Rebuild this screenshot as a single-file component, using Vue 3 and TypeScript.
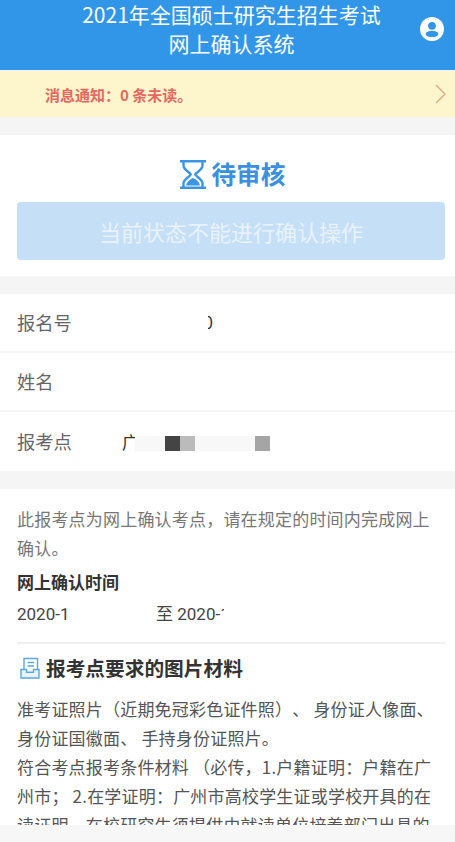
<script setup lang="ts">
const noticeText: string = '消息通知：0 条未读。'
</script>

<template>
  <div class="page">
    <header class="header">
      <h1 class="title">2021年全国硕士研究生招生考试<br />网上确认系统</h1>
      <svg class="avatar" viewBox="0 0 24 24" aria-hidden="true">
        <circle cx="12" cy="12" r="12" fill="#fff" />
        <circle cx="12" cy="8.8" r="3.9" fill="#3296e8" />
        <ellipse cx="12" cy="16.9" rx="6.4" ry="3.2" fill="#3296e8" />
      </svg>
    </header>

    <div class="notice">
      <span class="notice-text">{{ noticeText }}</span>
      <svg class="chevron" viewBox="0 0 11 20" aria-hidden="true">
        <path d="M1 1l9 9-9 9" fill="none" stroke="#e9a07c" stroke-width="1.2" />
      </svg>
    </div>

    <section class="card status">
      <div class="status-line">
        <svg class="hourglass" viewBox="0 0 26 29" aria-hidden="true">
          <path d="M0 1.2h26M0 27.8h26" stroke="#3a95e4" stroke-width="2.4" fill="none" />
          <path d="M3.5 1.2v4.6c0 3.6 6 6.4 7.3 8.7-1.3 2.3-7.3 5.1-7.3 8.7v4.6M22.5 1.2v4.6c0 3.6-6 6.4-7.3 8.7 1.3 2.3 7.3 5.1 7.3 8.7v4.6" stroke="#3a95e4" stroke-width="2.4" fill="none" />
          <path d="M6.200 25.500c0-3.500 4.300-6.500 6.800-7.500 2.500 1 6.800 4 6.800 7.500z" fill="#3a95e4" />
        </svg>
        <span class="status-text">待审核</span>
      </div>
      <button class="disabled-btn" type="button">当前状态不能进行确认操作</button>
    </section>

    <section class="card rows">
      <div class="row">
        <span class="label">报名号</span>
        <span class="value value-id"><span class="clip-glyph">0</span></span>
      </div>
      <div class="row">
        <span class="label">姓名</span>
      </div>
      <div class="row">
        <span class="label">报考点</span>
        <span class="value value-site">
          <span class="site-start">广</span>
          <i class="mosaic pale wide"></i>
          <i class="mosaic dark"></i>
          <i class="mosaic light"></i>
          <i class="mosaic pale gap"></i>
          <i class="mosaic mid"></i>
        </span>
      </div>
    </section>

    <section class="card info">
      <p class="muted">此报考点为网上确认考点，请在规定的时间内完成网上确认。</p>
      <h3 class="sub">网上确认时间</h3>
      <div class="dates">
        <span class="date-a"><span class="date-clip-a">2020-1</span></span>
        <span class="date-b">至 2020-<span class="date-clip">1</span></span>
      </div>
      <div class="divider"></div>
      <h2 class="section-title">
        <svg class="doc" viewBox="0 0 20 22" aria-hidden="true">
          <path d="M4 13V1.500h13.500V13" fill="none" stroke="#58a8e6" stroke-width="1.400" />
          <path d="M7.500 5.500h6.500M7.500 9h6.500" stroke="#58a8e6" stroke-width="1.400" />
          <path d="M1 12.500h5.500v2.800h7v-2.800H19v8.500H1z" fill="#e8f3fc" stroke="#58a8e6" stroke-width="1.400" />
        </svg>
        报考点要求的图片材料
      </h2>
      <p class="body">准考证照片（近期免冠彩色证件照）、 身份证人像面、身份证国徽面、 手持身份证照片。</p>
      <p class="body">符合考点报考条件材料 （必传，1.户籍证明：户籍在广州市； 2.在学证明：广州市高校学生证或学校开具的在读证明，在校研究生须提供由就读单位培养部门出具的</p>
    </section>

    <div class="bottom-bar"></div>
  </div>
</template>

<style>
html, body { margin: 0; background: #fff; }
</style>

<style scoped>
.page {
  position: relative;
  width: 455px;
  height: 842px;
  overflow: hidden;
  background: #f5f5f5;
  font-family: "Noto Sans CJK SC", Roboto, sans-serif;
  text-spacing-trim: space-all;
}
.header {
  position: relative;
  height: 70px;
  box-sizing: border-box;
  padding-left: 8px;
  background: #3296e8;
  text-align: center;
}
.title {
  margin: 0;
  font-size: 21px;
  font-weight: 400;
  line-height: 29px;
  color: #fff;
}
.avatar {
  position: absolute;
  top: 17px;
  right: 11px;
  width: 24px;
  height: 24px;
}
.notice {
  display: flex;
  align-items: center;
  justify-content: space-between;
  height: 46px;
  margin-top: 1px;
  padding: 0 9px 0 45px;
  background: #fdf5cc;
}
.notice-text {
  font-size: 15px;
  font-weight: 700;
  color: #e8675f;
}
.chevron { width: 11px; height: 20px; }
.card { background: #fff; margin-top: 18px; }
.status {
  height: 141px;
  box-sizing: border-box;
  padding: 25px 10px 0 17px;
}
.status-line {
  display: flex;
  align-items: center;
  justify-content: center;
  gap: 6px;
  height: 29px;
  margin-left: 3px;
}
.hourglass { width: 26px; height: 29px; }
.status-text {
  font-size: 24.600px;
  font-weight: 700;
  line-height: 27px;
  margin-top: -2px;
  color: #3a90de;
}
.disabled-btn {
  display: block;
  width: 428px;
  height: 58px;
  margin-top: 13px;
  padding: 0;
  border: 0;
  border-radius: 4px;
  background: #c4dff6;
  font-family: inherit;
  font-size: 22px;
  color: #e9f3fc;
}
.row {
  display: flex;
  align-items: center;
  height: 59px;
  box-sizing: border-box;
  padding: 0 0 1px 17px;
  border-bottom: 2px solid #f6f6f6;
}
.row:last-child { border-bottom: 0; }
.label {
  width: 104px;
  font-size: 18.300px;
  color: #666;
}
.value { display: flex; align-items: center; font-size: 17px; color: #333; }
.value-id { padding-left: 87px; }
.clip-glyph {
  display: block;
  width: 5px;
  height: 20px;
  overflow: hidden;
  direction: rtl;
  line-height: 20px;
}
.site-start {
  display: block;
  width: 13px;
  overflow: hidden;
  margin-left: 1px;
}
.mosaic { display: block; width: 15px; height: 15px; margin-top: 5px; }
.pale { background: #f8f8f8; }
.wide { width: 30px; }
.gap { width: 60px; }
.dark { background: #444; }
.light { background: #bbb; }
.mid { background: #a5a5a5; }
.info { padding: 15px 10px 0 17px; height: 340px; }
.muted, .body {
  margin: 0;
  font-size: 17px;
  letter-spacing: 0.2px;
  line-height: 29px;
}
.muted { color: #777; }
.body { color: #555; }
.sub {
  margin: 5px 0 0;
  font-size: 17px;
  font-weight: 700;
  letter-spacing: 0;
  line-height: 29px;
  color: #333;
}
.dates {
  display: flex;
  margin-top: 4px;
  font-family: Roboto, "Noto Sans CJK SC", sans-serif;
  font-size: 17px;
  line-height: 29px;
  color: #444;
}
.date-a { width: 139px; }
.date-clip-a { display: inline-block; width: 50px; overflow: hidden; white-space: nowrap; vertical-align: bottom; }
.date-clip { display: inline-block; width: 4px; overflow: hidden; vertical-align: bottom; }
.divider {
  height: 2px;
  margin-top: 13px;
  background: #f0f0f0;
}
.section-title {
  display: flex;
  align-items: center;
  gap: 6px;
  margin: 12px 0 15px;
  padding-left: 3px;
  font-size: 19.700px;
  font-weight: 700;
  line-height: 23px;
  color: #333;
}
.doc { width: 20px; height: 22px; flex: none; }
.bottom-bar {
  position: absolute;
  left: 0;
  right: 0;
  bottom: 0;
  height: 17px;
  background: #f7f7f7;
}
</style>
